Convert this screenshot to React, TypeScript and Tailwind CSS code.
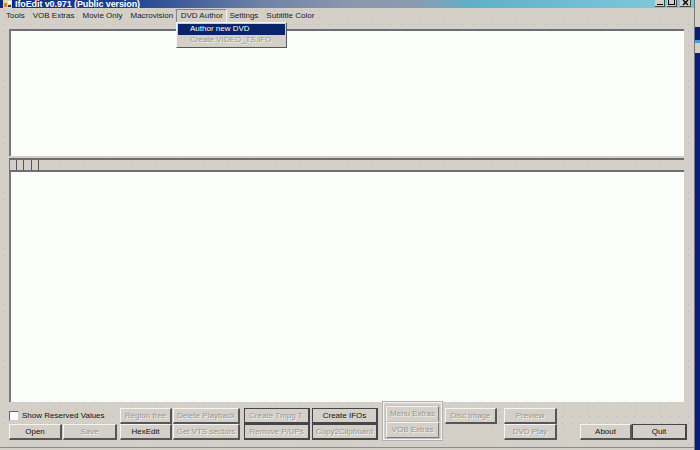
import React from "react";

const dots =
  "bg-[#d4d0c8] bg-[radial-gradient(#b4b6c4_0.7px,transparent_0.8px)] bg-[size:9px_7px]";

type Kind = "raised" | "dark" | "sunk";

function Btn({ label, w, on, kind = "raised" }: { label: string; w: string; on?: boolean; kind?: Kind }) {
  const edge =
    kind === "dark"
      ? "border border-[#45454d] border-b-2 border-r-2"
      : kind === "sunk"
        ? "border border-t-[#f4f4f4] border-l-[#f4f4f4] border-r-[#77777f] border-b-[#77777f] outline outline-[#c0c0c0]"
        : "border border-t-[#f4f4f4] border-l-[#f4f4f4] border-r-[#55555d] border-b-[#55555d] border-b-2 border-r-2";
  const tone = on ? "text-[#111111]" : "text-[#96968f] [text-shadow:1px_1px_0_#f4f4f4]";
  return (
    <div className={`${w} h-[16px] shrink-0 flex items-center justify-center text-[8px] leading-none whitespace-nowrap bg-[#d4d0c8] ${edge} ${tone}`}>
      {label}
    </div>
  );
}

function Menu({ label, ml }: { label: string; ml: string }) {
  return <span className={`${ml} whitespace-nowrap`}>{label}</span>;
}

export default function App() {
  return (
    <div className="w-[700px] h-[450px] overflow-hidden flex font-['Liberation_Sans',sans-serif] bg-[#d4d0c8]">
      <div className={`w-[694px] h-full flex flex-col relative ${dots}`}>
        <div className="h-[8px] shrink-0 flex justify-between overflow-hidden bg-[linear-gradient(90deg,#0f2b7e_0%,#1f4290_18%,#6f83a8_38%,#8a97ad_50%,#8a9bb0_60%,#5fb0c8_68%,#7cc6d8_93%)]">
          <div className="flex">
            <svg className="ml-[3px] w-[9px] h-[8px]" viewBox="0 0 9 8">
              <rect x="0" y="0" width="9" height="8" fill="#e8d8b0" />
              <rect x="1" y="3" width="3" height="4" fill="#d9822b" />
              <rect x="5" y="1" width="3" height="3" fill="#ffffff" />
              <rect x="5" y="5" width="3" height="2" fill="#3a3a6a" />
            </svg>
            <span className="ml-[3px] text-[9px] font-bold text-white leading-[8px] tracking-[-0.1px] whitespace-nowrap">
              IfoEdit v0.971 (Public version)
            </span>
          </div>
          <div className="flex h-[7px] mr-[3px]">
            <div className="w-[10px] bg-[#d4d0c8] border-r border-b border-[#444] flex items-end justify-center pb-[1px]"><div className="w-[6px] h-[1px] bg-black" /></div>
            <div className="ml-[2px] w-[10px] bg-[#d4d0c8] border-r border-b border-[#444] flex justify-center"><div className="w-[7px] h-[5px] border border-t-0 border-black" /></div>
            <div className="ml-[3px] w-[11px] bg-[#d4d0c8] border-r border-b border-[#444] flex justify-center">
              <svg className="w-[7px] h-[6px]" viewBox="0 0 7 6"><path d="M1 0 L6 5 M6 0 L1 5" stroke="#000" strokeWidth="1.4" /></svg>
            </div>
          </div>
        </div>
        <div className="h-[14px] mt-[1px] shrink-0 flex items-center text-[8px] leading-none text-[#1c1c1c]">
          <Menu label="Tools" ml="ml-[6px]" />
          <Menu label="VOB Extras" ml="ml-[8px]" />
          <Menu label="Movie Only" ml="ml-[8px]" />
          <Menu label="Macrovision" ml="ml-[8px]" />
          <span className="ml-[3px] h-[14px] px-[3.5px] flex items-center whitespace-nowrap border border-t-[#8a8a8a] border-l-[#8a8a8a] border-r-[#f4f4f4] border-b-[#f4f4f4]">DVD Author</span>
          <Menu label="Settings" ml="ml-[2px]" />
          <Menu label="Subtitle Color" ml="ml-[8px]" />
        </div>

        <div className="ml-[9px] mr-[10px] mt-[6px] flex flex-col shrink-0">
          <div className="h-[127px] bg-[#fbfdfb] border-t-2 border-l-2 border-t-[#6d6d75] border-l-[#77777f]" />
          <div className="h-[14px] mt-[2px] border-y-2 border-y-[#6d6d75] flex border-l border-l-[#6d6d75]">
            <div className="w-[7px] border-r border-[#55555f]" />
            <div className="w-[7px] border-r border-[#55555f]" />
            <div className="w-[8px] border-r border-[#55555f]" />
            <div className="w-[7px] border-r border-[#55555f]" />
          </div>
          <div className="h-[230px] bg-[#fbfdfb] border-l-2 border-l-[#77777f]" />
        </div>

        <div className="flex mt-[1px] ml-[9px] items-end h-[37px] shrink-0">
          <div className="w-[108px] flex flex-col">
            <div className="h-[16px] flex items-center">
              <div className="w-[10px] h-[10px] bg-white border border-t-[#666] border-l-[#666] border-r-[#ccc] border-b-[#ccc]" />
              <span className="ml-[3px] text-[8px] leading-none text-[#111111] whitespace-nowrap">Show Reserved Values</span>
            </div>
            <div className="flex gap-[1px]">
              <Btn label="Open" w="w-[53px]" on />
              <Btn label="Save" w="w-[54px]" />
            </div>
          </div>
          <div className="ml-[3px] flex flex-col">
            <div className="flex gap-[1px]">
              <Btn label="Region free" w="w-[52px]" />
              <Btn label="Delete Playback" w="w-[67px]" />
            </div>
            <div className="flex gap-[1px]">
              <Btn label="HexEdit" w="w-[52px]" on />
              <Btn label="Get VTS sectors" w="w-[67px]" />
            </div>
          </div>
          <div className="ml-[4px] flex flex-col">
            <div className="flex gap-[2px]">
              <Btn label="Create Tmpg T." w="w-[66px]" kind="dark" />
              <Btn label="Create IFOs" w="w-[66px]" kind="dark" on />
            </div>
            <div className="flex gap-[2px]">
              <Btn label="Remove P/UPs" w="w-[66px]" kind="dark" />
              <Btn label="Copy2Clipboard" w="w-[66px]" kind="dark" />
            </div>
          </div>
          <div className="ml-[5px] w-[59px] h-[38px] flex flex-col items-center justify-end pb-[1px] border border-[#f4f4f4] outline outline-[#b0b0b0]">
            <Btn label="Menu Extras" w="w-[53px]" kind="sunk" />
            <Btn label="VOB Extras" w="w-[53px]" kind="sunk" />
          </div>
          <div className="ml-[3px] mb-[16px]">
            <Btn label="Disc Image" w="w-[52px]" />
          </div>
          <div className="ml-[7px] flex flex-col">
            <Btn label="Preview" w="w-[53px]" />
            <Btn label="DVD Play" w="w-[53px]" />
          </div>
          <div className="ml-[23px] flex">
            <Btn label="About" w="w-[52px]" on />
            <Btn label="Quit" w="w-[55px]" kind="dark" on />
          </div>
        </div>

        <div className="mt-[7px] h-[1px] bg-[#8a8a92] shrink-0" />

        <div className="absolute top-[22px] left-[176px] w-[111px] h-[26px] p-[1px] bg-[#d4d0c8] border border-t-[#f4f4f4] border-l-[#f4f4f4] border-r-[#55555d] border-b-[#55555d] text-[8px] leading-none flex flex-col">
          <div className="h-[11px] bg-[#0a246a] text-white pl-[12px] flex items-center">Author new DVD</div>
          <div className="h-[12px] text-[#96968f] [text-shadow:1px_1px_0_#f4f4f4] pl-[12px] flex items-center">Create VIDEO_TS.IFO</div>
        </div>
      </div>
      <div className="flex-1 flex flex-col border-l border-l-[#77777f]">
        <div className="h-[27px] bg-[#d4d0c8]" />
        <div className="h-[13px] bg-[#0c1a78]" />
        <div className="h-[3px] bg-[#4a9ad8]" />
        <div className="h-[10px] bg-[#d4d0c8]" />
        <div className="flex-1 bg-[#0c1a78]" />
      </div>
    </div>
  );
}
